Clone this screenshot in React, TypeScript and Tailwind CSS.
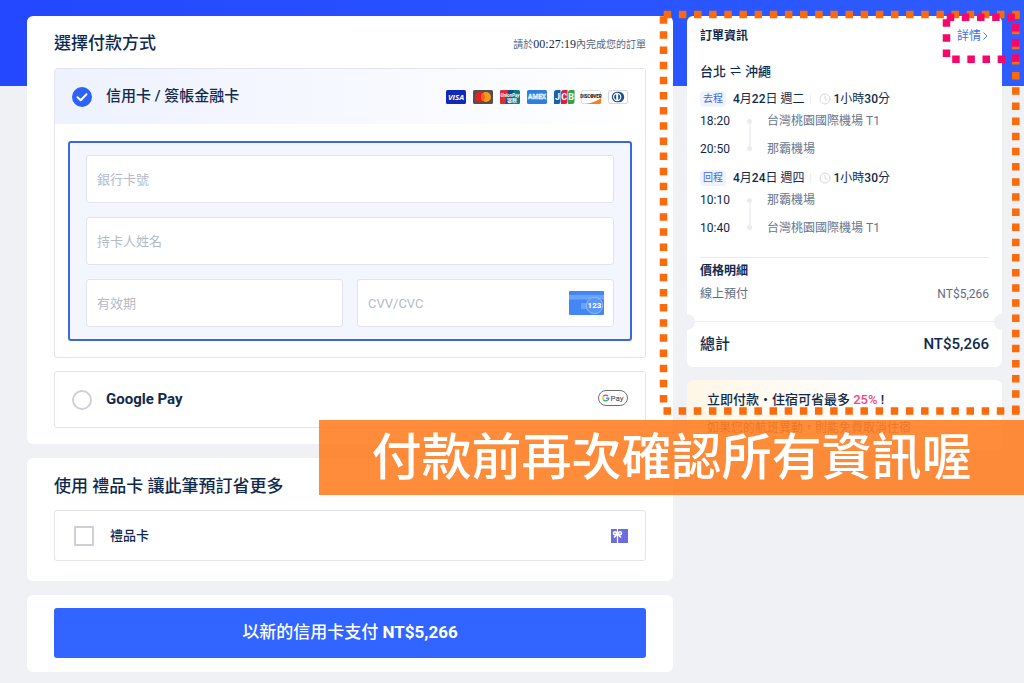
import type { ReactNode } from "react";
import { Clock } from "lucide-react";

function LogoFrame({ label, children }: { label: string; children: ReactNode }) {
  return (
    <svg role="img" aria-label={label} viewBox="0 0 20 14" className="h-3.5 w-5 overflow-visible">
      {children}
    </svg>
  );
}

function CardLogos() {
  return (
    <div className="flex gap-[7px]">
      <LogoFrame label="Visa">
        <rect width="20" height="14" rx="1.5" fill="#1228b8" />
        <text x="10" y="9.8" textAnchor="middle" fontSize="7.8" fontWeight="700" fontStyle="italic" fontFamily="Open Sans, sans-serif" fill="#fff">VISA</text>
      </LogoFrame>
      <LogoFrame label="Mastercard">
        <rect width="20" height="14" rx="1.5" fill="#55504f" />
        <circle cx="7" cy="7" r="5" fill="#ea1c22" />
        <circle cx="13" cy="7" r="5" fill="#f79a1c" />
        <path d="M10 3a5 5 0 0 1 0 8a5 5 0 0 1 0-8z" fill="#ff6014" />
      </LogoFrame>
      <LogoFrame label="UnionPay">
        <rect width="20" height="14" rx="1.5" fill="#0c7c84" />
        <path d="M1.5 0H8L5.500 14H1.500A1.500 1.500 0 0 1 0 12.500V1.500A1.500 1.500 0 0 1 1.500 0z" fill="#dc2c34" />
        <path d="M8 0h6l-2.500 14h-6z" fill="#154d7c" />
        <text x="10" y="7.200" textAnchor="middle" fontSize="4.600" fontWeight="700" fontStyle="italic" fontFamily="Roboto, sans-serif" fill="#fff">UnionPay</text>
        <text x="12" y="12" textAnchor="middle" fontSize="5" fontWeight="700" fontFamily="Noto Sans CJK TC, sans-serif" fill="#fff">银联</text>
      </LogoFrame>
      <LogoFrame label="American Express">
        <rect width="20" height="14" rx="1.5" fill="#2f80dc" />
        <text x="10" y="9.300" textAnchor="middle" fontSize="6.500" fontWeight="700" fontFamily="Roboto, sans-serif" fill="#2f80dc" stroke="#e6f1ff" strokeWidth="0.600">AMEX</text>
      </LogoFrame>
      <LogoFrame label="JCB">
        <path d="M2.500 0H6.500V11.500A2.500 2.500 0 0 1 4 14H0V2.500A2.500 2.500 0 0 1 2.500 0z" fill="#1b5fae" />
        <path d="M9.500 0H13.500V11.500A2.500 2.500 0 0 1 11 14H7V2.500A2.500 2.500 0 0 1 9.500 0z" fill="#dc1f48" />
        <path d="M16.500 0H20.500V11.500A2.500 2.500 0 0 1 18 14H14V2.500A2.500 2.500 0 0 1 16.500 0z" fill="#37a24a" />
        <text x="3.500" y="10.200" textAnchor="middle" fontSize="9" fontWeight="700" fontFamily="Roboto, sans-serif" fill="#fff">J</text>
        <text x="10.200" y="10.200" textAnchor="middle" fontSize="9" fontWeight="700" fontFamily="Roboto, sans-serif" fill="#fff">C</text>
        <text x="17.200" y="10.200" textAnchor="middle" fontSize="9" fontWeight="700" fontFamily="Roboto, sans-serif" fill="#fff">B</text>
      </LogoFrame>
      <LogoFrame label="Discover">
        <rect x="0.500" y="0.500" width="19" height="13" rx="1.500" fill="#fff" stroke="#dddfe4" />
        <path d="M20 8v4.500a1.500 1.500 0 0 1-1.500 1.500H5C11 13 17 10.500 20 8z" fill="#f5821f" />
        <circle cx="11" cy="6" r="1.700" fill="#f07c1c" />
        <text x="10" y="7.700" textAnchor="middle" fontSize="4.500" fontWeight="900" fontFamily="Roboto, sans-serif" fill="#1c1a1b">DISCOVER</text>
      </LogoFrame>
      <LogoFrame label="Diners Club">
        <rect x="0.500" y="0.500" width="19" height="13" rx="1.500" fill="#fff" stroke="#d5d9e3" />
        <path d="M9 1.800h2a5.200 5.200 0 0 1 0 10.400H9A5.200 5.200 0 0 1 9 1.800z" fill="#1d4f92" />
        <circle cx="9.200" cy="7" r="4.200" fill="#fff" />
        <path d="M8.200 4v6a3.200 3.200 0 0 1 0-6zM10.200 4v6a3.200 3.200 0 0 0 0-6z" fill="#1d4f92" />
      </LogoFrame>
    </div>
  );
}

function GooglePayBadge() {
  return (
    <svg role="img" aria-label="Google Pay" viewBox="0 0 30 16" className="-mt-1 h-4 w-[30px]">
      <rect x="0.500" y="0.500" width="29" height="15" rx="7.500" fill="#fff" stroke="#6b6f74" />
      <g fill="none" strokeWidth="1.300">
        <path d="M10 6.100A3 3 0 0 0 5.300 6.400" stroke="#ea4335" />
        <path d="M5.300 6.400A3 3 0 0 0 5.300 9.600" stroke="#fbbc04" />
        <path d="M5.300 9.600A3 3 0 0 0 9.600 10.300" stroke="#34a853" />
        <path d="M9.600 10.300A3 3 0 0 0 10.800 8.100H8" stroke="#4285f4" />
      </g>
      <text x="12.500" y="11" fontSize="8" fontFamily="Roboto, sans-serif" fill="#3c4043">Pay</text>
    </svg>
  );
}

function CvvIcon() {
  return (
    <svg aria-hidden="true" viewBox="0 0 35 24" className="h-6 w-[35px]">
      <rect width="35" height="24" rx="1" fill="#4287f5" />
      <rect y="4" width="35" height="4.500" fill="#6ba3f8" />
      <rect x="12" y="12" width="20" height="6" fill="#6ba3f8" />
      <circle cx="25.500" cy="14.500" r="8.200" fill="#5a97f7" stroke="#8fbafa" />
      <text x="25.500" y="17.300" textAnchor="middle" fontSize="8" fontWeight="700" fontFamily="Roboto, sans-serif" fill="#fff">123</text>
    </svg>
  );
}

function GiftIcon() {
  return (
    <svg aria-hidden="true" viewBox="0 0 17 14" className="h-3.5 w-[17px]">
      <rect width="17" height="14" fill="#6c6ce0" />
      <path d="M6.500 0v14" stroke="#fff" strokeWidth="1.200" />
      <g fill="none" stroke="#fff" strokeWidth="1.600">
        <circle cx="4" cy="4.200" r="1.500" />
        <circle cx="9" cy="4.200" r="1.500" />
        <path d="M6.500 5L3 8.500M6.500 5L10 8.500" />
      </g>
    </svg>
  );
}

function RadioMark({ id, checked }: { id: string; checked?: boolean }) {
  return (
    <span className="grid size-5 shrink-0">
      <input
        id={id}
        type="radio"
        name="method"
        defaultChecked={checked}
        className="peer col-start-1 row-start-1 size-5 appearance-none rounded-full border-2 border-[#cdd0d8] bg-white checked:border-[#2f62f6] checked:bg-[#2f62f6]"
      />
      <svg viewBox="0 0 20 20" aria-hidden="true" className="pointer-events-none col-start-1 row-start-1 hidden size-5 peer-checked:block">
        <path d="M5.500 10.200l3.200 3.100 5.800-6" fill="none" stroke="#fff" strokeWidth="2" strokeLinecap="round" strokeLinejoin="round" />
      </svg>
    </span>
  );
}

const field =
  "h-12 w-full min-w-0 rounded-[3px] border border-[#e1e4ee] bg-white px-2.5 text-[13px] text-[#0f294d] placeholder:text-[#b4bac6] focus:outline-none";

interface Leg {
  tag: string;
  date: ReactNode;
  stops: [string, string][];
}

const legs: Leg[] = [
  {
    tag: "去程",
    date: <><b className="font-medium">4</b>月<b className="font-medium">22</b>日 週二</>,
    stops: [["18:20", "台灣桃園國際機場 T1"], ["20:50", "那霸機場"]],
  },
  {
    tag: "回程",
    date: <><b className="font-medium">4</b>月<b className="font-medium">24</b>日 週四</>,
    stops: [["10:10", "那霸機場"], ["10:40", "台灣桃園國際機場 T1"]],
  },
];

function LegBlock({ leg }: { leg: Leg }) {
  return (
    <section>
      <div className="flex h-[22px] items-center text-xs">
        <span className="rounded-sm bg-[#f0f3ff] px-[3px] text-[10px] leading-4 text-[#3f66e8]">{leg.tag}</span>
        <span className="ml-[7px] text-[#0f294d]">{leg.date}</span>
        <span className="mr-2 ml-1.5 h-2.5 w-px bg-[#eceef2]" />
        <Clock className="mr-0.5 size-3 text-[#d3d7de]" strokeWidth={2} />
        <span className="text-[#0f294d]"><b className="font-medium">1</b>小時<b className="font-medium">30</b>分</span>
      </div>
      <div className="mt-px grid grid-cols-[47px_20px_1fr] text-xs">
        <div className="text-[#0f294d]">
          {leg.stops.map(([time]) => <p key={time} className="mb-2 leading-5">{time}</p>)}
        </div>
        <div className="mt-2 mb-4 flex w-[5px] flex-col items-center">
          <span className="size-[5px] rounded-full bg-[#e9ebef]" />
          <span className="w-0.5 flex-1 bg-[#f1f2f5]" />
          <span className="size-[5px] rounded-full bg-[#e9ebef]" />
        </div>
        <div className="text-[#68758a]">
          {leg.stops.map(([time, place]) => <p key={time} className="mb-2 leading-5">{place}</p>)}
        </div>
      </div>
    </section>
  );
}

function Highlights() {
  return (
    <svg aria-hidden="true" viewBox="0 0 364 408" className="pointer-events-none absolute -top-1.5 -left-7 z-20 h-[408px] w-[364px]">
      <g fill="none" stroke="#fc6a0a" strokeWidth="7.500" strokeDasharray="7.500 7.650">
        <path d="M4.700 4.500H361" />
        <path d="M4.500 6.200V394" />
        <path d="M4.500 401H361" />
        <path d="M356.800 1.500V405" />
      </g>
      <g fill="none" stroke="#f8066a" strokeWidth="7.500" strokeDasharray="7.500 7.650">
        <path d="M287.700 7.300H357" />
        <path d="M287.500 9.200V50" />
        <path d="M293.200 49.300H347" />
        <path d="M356.800 14V53" />
      </g>
    </svg>
  );
}

export default function App() {
  return (
    <div className="relative min-h-screen bg-[#eff1f5] bg-[linear-gradient(100deg,#2348ff,#2d5cff)] bg-[length:100%_86px] bg-no-repeat pt-4 pr-[22px] pb-[11px] pl-[27px] font-[Roboto,'Noto_Sans_CJK_TC',sans-serif] text-[#0f294d]">
      <div className="flex items-start gap-3.5">
        <main className="flex min-w-0 flex-1 flex-col gap-3.5">
          <section className="rounded-md bg-white px-[27px] py-4">
            <div className="flex h-6 items-center justify-between">
              <h1 className="text-[17px] font-medium">選擇付款方式</h1>
              <p className="text-[10px] text-[#56657d]">
                請於<span className="font-['Liberation_Serif',serif] text-xs text-[#0f294d]">00:27:19</span>內完成您的訂單
              </p>
            </div>

            <div className="mt-3 rounded-[3px] border border-[#e3e5ec]">
              <div className="flex h-[55px] items-center bg-linear-to-r from-[#eef2ff] to-white px-[17px]">
                <RadioMark id="card" checked />
                <label htmlFor="card" className="flex-1 pl-3.5 text-[15px] font-medium">信用卡 / 簽帳金融卡</label>
                <CardLogos />
              </div>
              <form className="mx-[13px] mt-[17px] mb-4 grid grid-cols-2 gap-3.5 rounded-[3px] border-2 border-[#3a66e0] bg-[#f3f6ff] px-4 py-3">
                <input aria-label="銀行卡號" placeholder="銀行卡號" className={`${field} col-span-2`} />
                <input aria-label="持卡人姓名" placeholder="持卡人姓名" className={`${field} col-span-2`} />
                <input aria-label="有效期" placeholder="有效期" className={field} />
                <div className="flex h-12 items-center rounded-[3px] border border-[#e1e4ee] bg-white pr-[9px]">
                  <input aria-label="CVV/CVC" placeholder="CVV/CVC" className="h-full min-w-0 flex-1 bg-transparent px-2.5 text-[13px] placeholder:text-[#b4bac6] focus:outline-none" />
                  <CvvIcon />
                </div>
              </form>
            </div>

            <div className="mt-[13px] flex h-[57px] items-center rounded-[3px] border border-[#e3e5ec] px-[17px]">
              <RadioMark id="gpay" />
              <label htmlFor="gpay" className="flex-1 pl-3.5 text-[15px] font-bold">Google Pay</label>
              <GooglePayBadge />
            </div>
          </section>

          <section className="rounded-md bg-white px-[27px] pt-4 pb-5">
            <h2 className="text-[17px] leading-6 font-medium">使用 禮品卡 讓此筆預訂省更多</h2>
            <div className="mt-3 flex h-[51px] items-center rounded-[3px] border border-[#e3e5ec] pr-[17px] pl-[19px]">
              <input id="gift" type="checkbox" className="size-5 appearance-none border-2 border-[#cdd0d8] bg-white checked:bg-[#2f62f6]" />
              <label htmlFor="gift" className="flex-1 pl-4 text-[13px] font-medium">禮品卡</label>
              <GiftIcon />
            </div>
          </section>

          <section className="rounded-md bg-white px-[27px] pt-[13px] pb-3.5">
            <button type="button" className="h-[50px] w-full rounded-[3px] bg-[#3264ff] text-[17px] font-medium text-white">
              以新的信用卡支付 <span className="font-bold">NT$5,266</span>
            </button>
          </section>
        </main>

        <aside className="relative w-[315px] shrink-0">
          <section className="overflow-hidden rounded-md bg-white text-xs">
            <div className="px-[13px] pt-2.5">
              <div className="flex items-center justify-between leading-5">
                <h2 className="font-bold">訂單資訊</h2>
                <a href="#details" className="flex items-center text-[#4a70ea]">
                  詳情
                  <svg viewBox="0 0 8 8" aria-hidden="true" className="size-2">
                    <path d="M2.500 0.500L6 4L2.500 7.500" fill="none" stroke="currentColor" />
                  </svg>
                </a>
              </div>
              <h3 className="mt-4 mb-1.5 flex items-center gap-1 text-[13px] leading-5 font-medium">
                台北<span className="text-[11px]">⇌</span>沖繩
              </h3>
              {legs.map((leg) => <LegBlock key={leg.tag} leg={leg} />)}
              <div className="mt-[11px] border-t border-[#e8eaf0]" />
              <h3 className="mt-[3px] leading-5 font-bold">價格明細</h3>
              <p className="mt-[3px] flex justify-between pb-[17px] leading-5 text-[#5f6d84]">
                <span>線上預付</span><span>NT$5,266</span>
              </p>
            </div>
            <div className="relative border-t border-[#eceef2]">
              <span className="absolute -top-2 -left-2 size-4 rounded-full bg-[#eff1f5]" />
              <span className="absolute -top-2 -right-2 size-4 rounded-full bg-[#eff1f5]" />
              <p className="flex h-[45px] items-center justify-between px-[13px] text-[15px] font-medium">
                <span>總計</span>
                <span>NT$5,266</span>
              </p>
            </div>
          </section>

          <section className="mt-[13px] flex h-[70px] flex-col rounded-md bg-white bg-linear-to-r from-[#fff6e6] to-white to-60% px-5 pt-2.5">
            <p className="text-[13px] leading-5 font-medium">
              立即付款・住宿可省最多 <span className="text-[#f0458a]">25%</span> !
            </p>
            <p className="mt-2 text-xs leading-5 text-[#6f7b8f]">如果您的航班異動，則能免費取消住宿</p>
          </section>
          <Highlights />
        </aside>
      </div>

      <div className="absolute top-[420px] right-0 left-[319px] z-10 flex h-[75px] items-center justify-center bg-[#ff7817]/85 text-[50px] leading-none font-medium text-white">
        付款前再次確認所有資訊喔
      </div>
    </div>
  );
}
